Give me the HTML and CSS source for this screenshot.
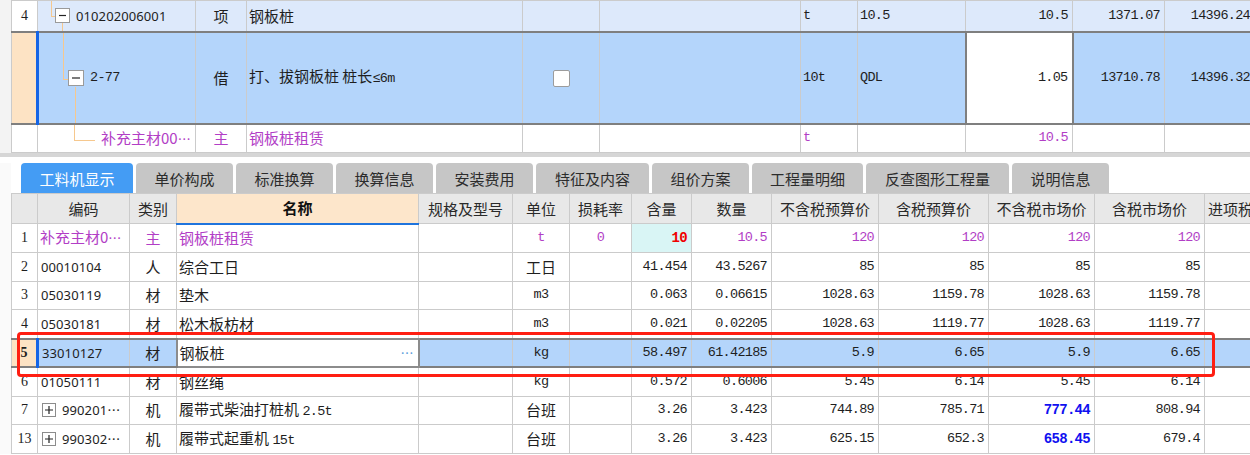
FILE: index.html
```html
<!DOCTYPE html>
<html lang="zh-CN">
<head>
<meta charset="utf-8">
<title>工料机显示</title>
<link rel="stylesheet" href="styles.css">
</head>
<body>
<div class="pane top-pane">
  <div class="gutter"></div>
  <div class="pane-body">
    <table class="grid top">
      <colgroup>
        <col class="c26"><col class="c158"><col class="c51"><col class="c276"><col class="c77"><col class="c201"><col class="c57"><col class="c108"><col class="c107"><col class="c92"><col class="c90">
      </colgroup>
      <tr class="row-parent">
        <td class="rn">4</td>
        <td class="code">
          <span class="tl v a1"></span><span class="tl h a2"></span><span class="tl v a3"></span>
          <div class="cw lvl1">
            <svg class="box" width="15" height="15" viewBox="0 0 15 15"><rect x="0.5" y="0.5" width="14" height="14" fill="#fff" stroke="#9a9a9a"/><path d="M4 7.5h7" stroke="#222" stroke-width="1.2"/></svg>
            <span class="cd">010202006001</span>
          </div>
        </td>
        <td class="ctr">项</td>
        <td>钢板桩</td>
        <td></td>
        <td></td>
        <td class="m">t</td>
        <td class="m">10.5</td>
        <td class="n">10.5</td>
        <td class="n">1371.07</td>
        <td class="n">14396.24</td>
      </tr>
      <tr class="sel sel-top">
        <td class="rn hl"></td>
        <td class="code mark">
          <span class="tl v b1"></span><span class="tl h b2"></span><span class="tl v b3"></span>
          <div class="cw lvl2">
            <svg class="box" width="16" height="16" viewBox="0 0 16 16"><rect x="0.5" y="0.5" width="15" height="15" fill="#fff" stroke="#9a9a9a"/><path d="M4 8h8" stroke="#222" stroke-width="1.2"/></svg>
            <span class="m">2-77</span>
          </div>
        </td>
        <td class="ctr">借</td>
        <td>打、拔钢板桩 桩长<span class="m">≤6m</span></td>
        <td class="ctr"><span class="chk"></span></td>
        <td></td>
        <td class="m">10t</td>
        <td class="m">QDL</td>
        <td class="n focus">1.05</td>
        <td class="n">13710.78</td>
        <td class="n">14396.32</td>
      </tr>
      <tr class="row-child">
        <td class="rn"></td>
        <td class="code">
          <span class="tl v c1"></span><span class="tl h c2"></span>
          <div class="cw lvl3"><span class="p">补充主材00<span class="ell">⋯</span></span></div>
        </td>
        <td class="ctr p">主</td>
        <td class="p">钢板桩租赁</td>
        <td></td>
        <td></td>
        <td class="m p">t</td>
        <td></td>
        <td class="n p">10.5</td>
        <td></td>
        <td></td>
      </tr>
    </table>
  </div>
</div>
<div class="splitter"></div>
<div class="pane bottom-pane">
  <div class="gutter light"></div>
  <div class="pane-body">
    <div class="tabs">
      <div class="tab active w112">工料机显示</div>
      <div class="tab w97">单价构成</div>
      <div class="tab w97">标准换算</div>
      <div class="tab w97">换算信息</div>
      <div class="tab w97">安装费用</div>
      <div class="tab w113">特征及内容</div>
      <div class="tab w97">组价方案</div>
      <div class="tab w111">工程量明细</div>
      <div class="tab w143">反查图形工程量</div>
      <div class="tab w97">说明信息</div>
    </div>
    <table class="grid bottom">
      <colgroup>
        <col class="c26"><col class="c92"><col class="c47"><col class="c242"><col class="c94"><col class="c57"><col class="c62"><col class="c60"><col class="c80"><col class="c107"><col class="c110"><col class="c106"><col class="c110"><col class="c100">
      </colgroup>
      <tr class="head">
        <th class="rn"></th>
        <th>编码</th>
        <th>类别</th>
        <th class="hname">名称</th>
        <th>规格及型号</th>
        <th>单位</th>
        <th>损耗率</th>
        <th>含量</th>
        <th>数量</th>
        <th>不含税预算价</th>
        <th>含税预算价</th>
        <th>不含税市场价</th>
        <th>含税市场价</th>
        <th class="lft">进项税额</th>
      </tr>
      <tr class="r">
        <td class="rn">1</td>
        <td class="p">补充主材0<span class="ell">⋯</span></td>
        <td class="ctr p">主</td>
        <td class="p">钢板桩租赁</td>
        <td></td>
        <td class="ctr m p">t</td>
        <td class="ctr m p">0</td>
        <td class="n cyan red">10</td>
        <td class="n p">10.5</td>
        <td class="n p">120</td>
        <td class="n p">120</td>
        <td class="n p">120</td>
        <td class="n p">120</td>
        <td></td>
      </tr>
      <tr class="r">
        <td class="rn">2</td>
        <td class="cd">00010104</td>
        <td class="ctr">人</td>
        <td>综合工日</td>
        <td></td>
        <td class="ctr">工日</td>
        <td></td>
        <td class="n">41.454</td>
        <td class="n">43.5267</td>
        <td class="n">85</td>
        <td class="n">85</td>
        <td class="n">85</td>
        <td class="n">85</td>
        <td></td>
      </tr>
      <tr class="r">
        <td class="rn">3</td>
        <td class="cd">05030119</td>
        <td class="ctr">材</td>
        <td>垫木</td>
        <td></td>
        <td class="ctr m">m3</td>
        <td></td>
        <td class="n">0.063</td>
        <td class="n">0.06615</td>
        <td class="n">1028.63</td>
        <td class="n">1159.78</td>
        <td class="n">1028.63</td>
        <td class="n">1159.78</td>
        <td></td>
      </tr>
      <tr class="r">
        <td class="rn">4</td>
        <td class="cd">05030181</td>
        <td class="ctr">材</td>
        <td>松木板枋材</td>
        <td></td>
        <td class="ctr m">m3</td>
        <td></td>
        <td class="n">0.021</td>
        <td class="n">0.02205</td>
        <td class="n">1028.63</td>
        <td class="n">1119.77</td>
        <td class="n">1028.63</td>
        <td class="n">1119.77</td>
        <td></td>
      </tr>
      <tr class="r sel">
        <td class="rn hl b">5</td>
        <td class="cd mark">33010127</td>
        <td class="ctr">材</td>
        <td class="edit"><div class="editbox"><span>钢板桩</span><span class="dots">⋯</span></div></td>
        <td></td>
        <td class="ctr m">kg</td>
        <td></td>
        <td class="n">58.497</td>
        <td class="n">61.42185</td>
        <td class="n">5.9</td>
        <td class="n">6.65</td>
        <td class="n">5.9</td>
        <td class="n">6.65</td>
        <td></td>
      </tr>
      <tr class="r">
        <td class="rn">6</td>
        <td class="cd">01050111</td>
        <td class="ctr">材</td>
        <td>钢丝绳</td>
        <td></td>
        <td class="ctr m">kg</td>
        <td></td>
        <td class="n">0.572</td>
        <td class="n">0.6006</td>
        <td class="n">5.45</td>
        <td class="n">6.14</td>
        <td class="n">5.45</td>
        <td class="n">6.14</td>
        <td></td>
      </tr>
      <tr class="r">
        <td class="rn">7</td>
        <td class="code">
          <div class="cw plus">
            <svg class="box" width="14" height="14" viewBox="0 0 14 14"><rect x="0.5" y="0.5" width="13" height="13" fill="#fff" stroke="#8c8c8c"/><path d="M3 7h8M7 3v8" stroke="#222" stroke-width="1.2"/></svg>
            <span class="cd">990201<span class="ell">⋯</span></span>
          </div>
        </td>
        <td class="ctr">机</td>
        <td>履带式柴油打桩机 <span class="m">2.5t</span></td>
        <td></td>
        <td class="ctr">台班</td>
        <td></td>
        <td class="n">3.26</td>
        <td class="n">3.423</td>
        <td class="n">744.89</td>
        <td class="n">785.71</td>
        <td class="n blue">777.44</td>
        <td class="n">808.94</td>
        <td></td>
      </tr>
      <tr class="r">
        <td class="rn">13</td>
        <td class="code">
          <div class="cw plus">
            <svg class="box" width="14" height="14" viewBox="0 0 14 14"><rect x="0.5" y="0.5" width="13" height="13" fill="#fff" stroke="#8c8c8c"/><path d="M3 7h8M7 3v8" stroke="#222" stroke-width="1.2"/></svg>
            <span class="cd">990302<span class="ell">⋯</span></span>
          </div>
        </td>
        <td class="ctr">机</td>
        <td>履带式起重机 <span class="m">15t</span></td>
        <td></td>
        <td class="ctr">台班</td>
        <td></td>
        <td class="n">3.26</td>
        <td class="n">3.423</td>
        <td class="n">625.15</td>
        <td class="n">652.3</td>
        <td class="n blue">658.45</td>
        <td class="n">679.4</td>
        <td></td>
      </tr>
    </table>
  </div>
</div>
<div class="redbox"></div>
</body>
</html>
```
FILE: styles.css
```css
html, body {
  margin: 0;
  padding: 0;
}
body {
  width: 1250px;
  height: 455px;
  overflow: hidden;
  position: relative;
  background: #fff;
  font-family: "Noto Sans CJK SC", "Noto Sans", sans-serif;
  font-size: 15px;
  color: #1e1e1e;
}

.pane {
  display: flex;
}
.gutter {
  width: 11px;
  flex: none;
  background: #f3f3f3;
}
.gutter.light {
  background: #fafafa;
}
.pane-body {
  flex: 1;
  min-width: 0;
  overflow: hidden;
}

.splitter {
  height: 4px;
  background: #d6d6d6;
  margin-bottom: 6px;
}

/* ---------- grid ---------- */
.grid {
  border-collapse: collapse;
  table-layout: fixed;
  border-left: 1px solid #b9b9b9;
}
.grid.top { width: 1243px; }
.grid.bottom { width: 1293px; }

.c26 { width: 26px; }
.c47 { width: 47px; }
.c51 { width: 51px; }
.c57 { width: 57px; }
.c60 { width: 60px; }
.c62 { width: 62px; }
.c77 { width: 77px; }
.c80 { width: 80px; }
.c90 { width: 90px; }
.c92 { width: 92px; }
.c94 { width: 94px; }
.c100 { width: 100px; }
.c106 { width: 106px; }
.c107 { width: 107px; }
.c108 { width: 108px; }
.c110 { width: 110px; }
.c158 { width: 158px; }
.c201 { width: 201px; }
.c242 { width: 242px; }
.c276 { width: 276px; }

.grid td, .grid th {
  border: 1px solid #cbcbcb;
  padding: 0 2px;
  white-space: nowrap;
  overflow: hidden;
  line-height: 18px;
  text-align: left;
}
.grid td.ctr { text-align: center; }

.top tr.row-parent { height: 31px; }
.top tr.row-parent td { background: #dde9fb; }
.top tr.row-parent td.rn { background: #fff; }
.top tr.sel-top { height: 92px; }
.top tr.row-child { height: 29px; }

.grid td.rn {
  text-align: center;
  font-family: "Liberation Serif", serif;
  font-size: 14px;
  background: #fff;
  padding: 0;
}
.grid td.rn.hl { background: #fde3c4; }
.grid td.rn.b { font-weight: bold; }

.m {
  font-family: "Liberation Mono", monospace;
  font-size: 13.5px;
  letter-spacing: -0.7px;
}
.grid td.n {
  font-family: "Liberation Mono", monospace;
  font-size: 13.5px;
  letter-spacing: -0.7px;
  text-align: right;
  padding-right: 4px;
}
.cd {
  font-family: "Noto Sans", sans-serif;
  font-size: 13px;
  letter-spacing: 0.1px;
}
.grid td.cd { padding-left: 3px; }
.ell {
  font-family: "Noto Sans CJK SC", sans-serif;
  font-size: 13px;
  letter-spacing: 0;
}

.p { color: #b23ec6; }
.grid td.red { color: #f00000; font-weight: bold; font-size: 14px; }
.grid td.blue { color: #1010f0; font-weight: bold; font-size: 14px; }
.grid td.cyan { background: #d9f5f5; }

/* selected rows */
.grid tr.sel td {
  background: #b4d5fb;
  border-top: 2px solid #7f7f7f;
  border-bottom: 2px solid #7f7f7f;
}
.grid tr.sel td.rn.hl { background: #fde3c4; }
.grid tr.sel td.mark { border-left: 3px solid #1565e6; }
.grid tr.sel td.focus {
  background: #fff;
  border: 2px solid #7f7f7f;
}
.grid tr.sel td.edit {
  background: #fff;
  border: 2px solid #8c8c8c;
  padding: 0 4px 0 2px;
}
.editbox {
  display: flex;
  justify-content: space-between;
  align-items: center;
}
.dots {
  color: #5c9ddb;
  font-size: 13px;
}

/* tree */
.grid td.code {
  position: relative;
  padding: 0;
}
.cw {
  display: flex;
  align-items: center;
  gap: 6px;
}
.cw.lvl1 { padding-left: 17px; }
.cw.lvl2 { padding-left: 29px; }
.cw.lvl3 { padding-left: 63px; }
.cw.plus { padding-left: 4px; }
.box { flex: none; display: block; }

.tl {
  position: absolute;
  background: #f6c88e;
}
.tl.v { width: 1px; }
.tl.h { height: 1px; }
.tl.a1 { left: 13px; top: 0; height: 15px; }
.tl.a2 { left: 13px; top: 15px; width: 4px; }
.tl.a3 { left: 24px; top: 22px; bottom: 0; }
.tl.b1 { left: 24px; top: 0; height: 46px; }
.tl.b2 { left: 24px; top: 46px; width: 5px; }
.tl.b3 { left: 36px; top: 54px; bottom: 0; }
.tl.c1 { left: 36px; top: 0; height: 15px; }
.tl.c2 { left: 36px; top: 15px; width: 21px; }

.chk {
  display: inline-block;
  width: 15px;
  height: 15px;
  background: #fff;
  border: 1px solid #9c9c9c;
  border-radius: 2px;
  vertical-align: middle;
}

/* tabs */
.tabs {
  display: flex;
  gap: 3px;
  padding-left: 10px;
  height: 30px;
  align-items: flex-end;
}
.tab {
  height: 30px;
  background: #c6c6c6;
  border-radius: 4px 4px 0 0;
  color: #2c2c2c;
  display: flex;
  align-items: center;
  justify-content: center;
  font-size: 15px;
  box-sizing: border-box;
}
.tab.active {
  background: #449cf4;
  color: #fff;
}
.w97 { width: 97px; }
.w111 { width: 111px; }
.w112 { width: 112px; }
.w113 { width: 113px; }
.w143 { width: 143px; }

.bottom tr.head { height: 30px; }
.bottom tr.head th {
  background: #e8e8e8;
  font-weight: normal;
  color: #2a2a2a;
  text-align: center;
}
.bottom tr.head th.lft { text-align: left; padding-left: 3px; }
.bottom tr.head th.hname {
  background: #fde6cb;
  font-weight: bold;
  color: #111;
  border-bottom: 2px solid #1f74dd;
}
.bottom tr.r { height: 28.75px; }

/* annotation overlay */
.redbox {
  position: absolute;
  left: 17px;
  top: 332px;
  width: 1198px;
  height: 45px;
  box-sizing: border-box;
  border: 3px solid #ff1e12;
  border-radius: 4px;
  pointer-events: none;
}
```
